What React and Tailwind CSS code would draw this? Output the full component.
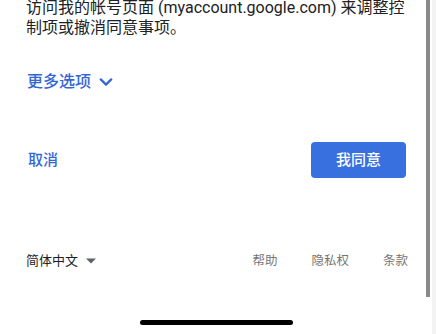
export default function App() {
  return (
    <div
      className="relative flex h-[334px] w-[436px] overflow-hidden bg-white"
      style={{ fontFamily: 'Roboto, "Noto Sans CJK SC", sans-serif' }}
    >
      <div className="flex flex-1 flex-col pl-[26px] pr-[20px]">
        <p className="mt-[-2px] text-[16px] leading-[20px] text-[#202124]">
          访问我的帐号页面 (myaccount.google.com) 来调整控制项或撤消同意事项。
        </p>

        <button className="mt-[34px] flex items-center gap-[6px] self-start pl-[1px] text-[16px] font-medium leading-[20px] text-[#3367d6]">
          更多选项
          <svg width="18" height="18" viewBox="0 0 24 24" fill="none" stroke="currentColor" strokeWidth="3" strokeLinecap="round" strokeLinejoin="round">
            <path d="M5 8.5l7 7 7-7" />
          </svg>
        </button>

        <div className="mt-[50px] flex items-center justify-between">
          <button className="pl-[2px] text-[15px] font-medium text-[#3367d6]">取消</button>
          <button className="h-[36px] w-[95px] rounded-[4px] bg-[#3871df] text-[15px] font-medium text-white">
            我同意
          </button>
        </div>

        <div className="mt-[74px] flex items-center text-[13px] leading-[18px]">
          <div className="flex items-center gap-[8px] text-[#202124]">
            简体中文
            <svg width="10" height="6" viewBox="0 0 10 5">
              <path d="M0 0l5 5 5-5z" fill="#5f6368" />
            </svg>
          </div>
          <div className="-mr-[2px] ml-auto flex gap-[34px] text-[12.5px] text-[#757575]">
            <span>帮助</span>
            <span>隐私权</span>
            <span>条款</span>
          </div>
        </div>

        <div className="mt-[50px] flex justify-center">
          <div className="h-[5px] w-[153px] rounded-full bg-black" />
        </div>
      </div>

      <div className="flex w-[10px] shrink-0">
        <div className="h-[297px] w-[4px] bg-[#8a8a8a]" />
        <div className="w-[2px]" />
        <div className="flex-1 bg-[#f3f3f3]" />
      </div>
    </div>
  );
}
